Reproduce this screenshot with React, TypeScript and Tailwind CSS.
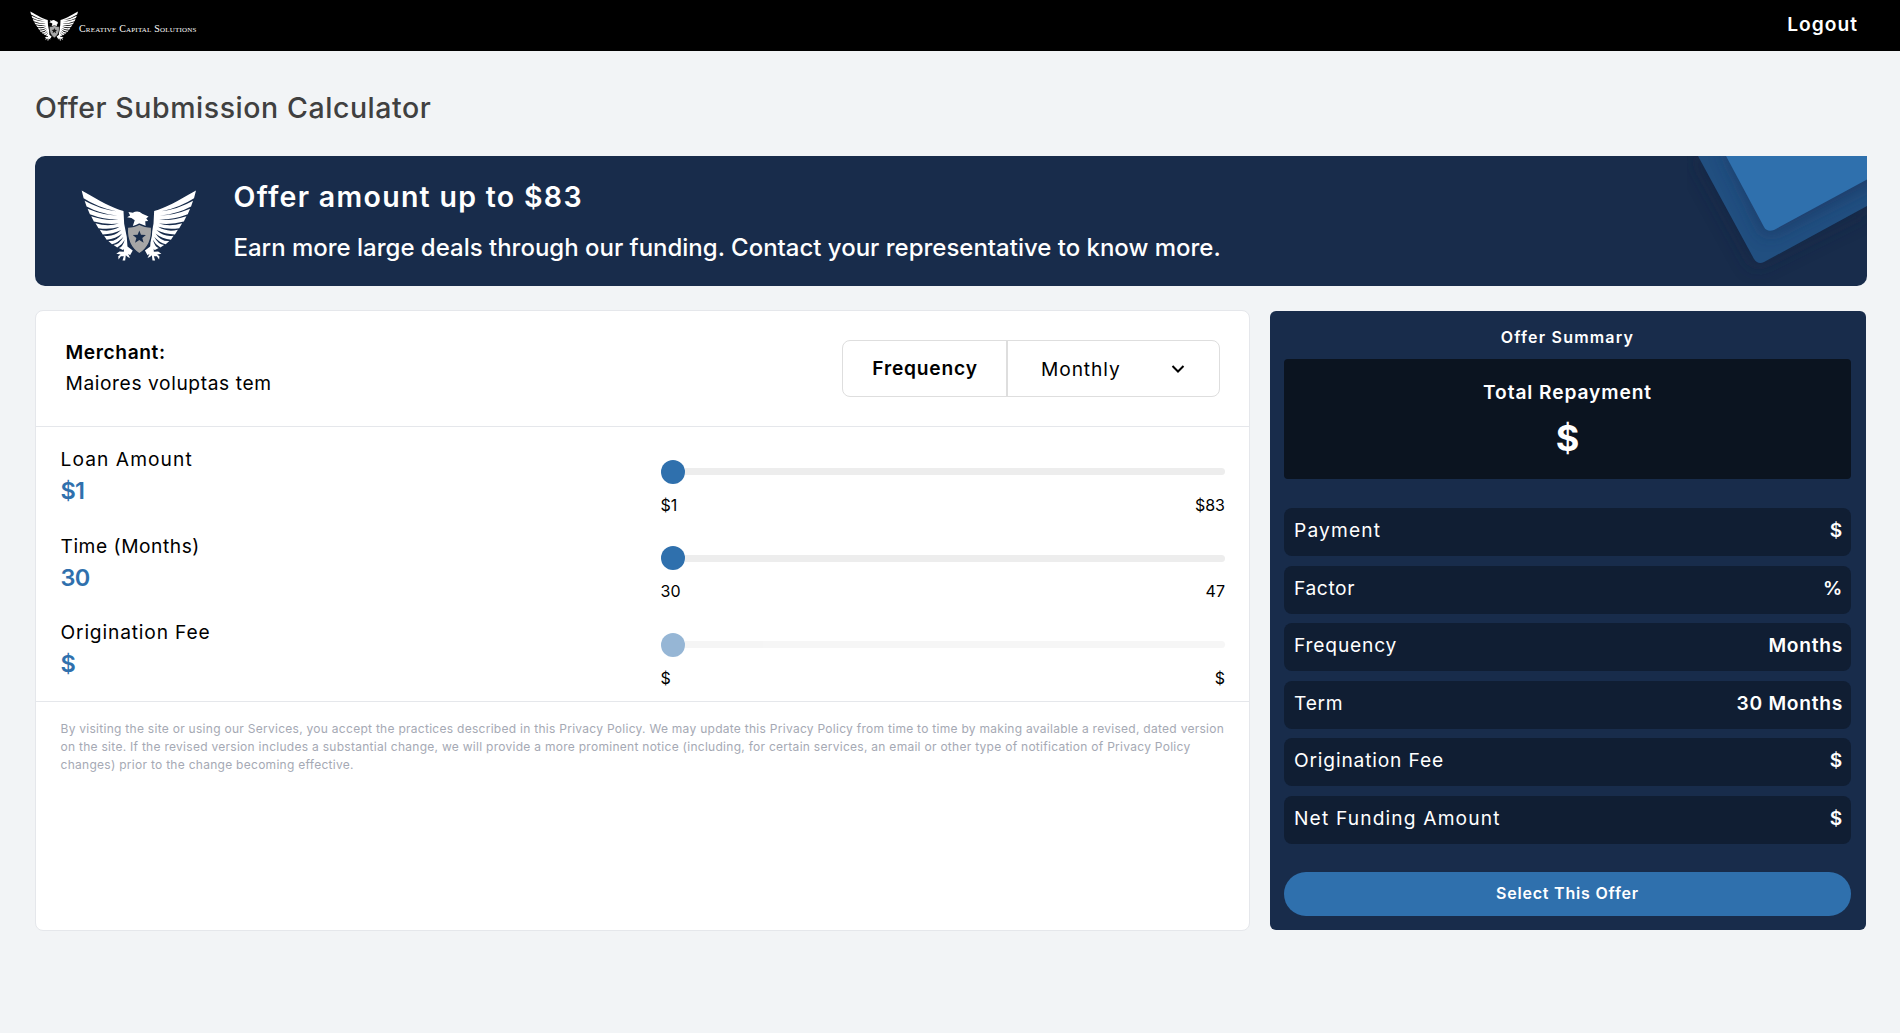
type EagleProps = { className: string; shade: string };

const WING =
  "M162 106 C128 98 92 76 35 44 L41 67 Q82 94 140 107 Q88 100 44 75 L50 92 Q90 114 145 120 Q98 118 53 99 L60 116 Q100 132 147 132 Q108 137 64 122 L72 138 Q108 148 148 144 Q114 155 77 143 L86 158 Q120 163 150 154 Q124 171 90 163 L99 177 Q130 177 155 164 Q132 186 103 181 L111 193 Q138 190 158 174 Q141 199 116 197 L127 207 Q146 202 162 184 Q150 207 132 209 L143 217 Q157 209 166 193 Q159 216 148 218 L160 224 L174 214 L172 185 L164 145 Z";

const FOOT =
  "M164 206 L190 226 L182 240 L176 236 L182 249 L174 245 L169 240 L167 256 L159 256 L163 243 L154 243 L147 253 L146 243 L153 238 L140 236 L150 229 L163 230 Z";

function Eagle({ className, shade }: EagleProps) {
  return (
    <svg viewBox="33 42 349 216" className={className} fill="none">
      {[false, true].map((flip) => (
        <g key={String(flip)} transform={flip ? "translate(417 0) scale(-1 1)" : undefined} fill="#fff">
          <path d={WING} />
          <path d={FOOT} />
        </g>
      ))}
      <path
        d="M173 125 L182 120 L177 109 L190 111 Q206 102 219 114 L238 123 L231 129 L237 136 L228 137 L229 152 L190 152 L196 134 L186 127 Z"
        fill="#fff"
      />
      <path
        d="M174 155 Q195 155 210 146 Q226 155 247 155 Q251 210 210 236 Q170 210 174 155 Z"
        fill="#a6a6a6"
        stroke={shade}
        strokeWidth="4"
      />
      <path
        d="M210 165 L215 178 L230 179 L219 188 L223 202 L210 194 L197 202 L201 188 L190 179 L205 178 Z"
        fill={shade}
      />
    </svg>
  );
}

function BannerShapes() {
  return (
    <svg viewBox="0 0 180 130" className="absolute right-0 top-0 h-[130px] w-[180px]">
      <defs>
        <filter id="soft" x="-30%" y="-30%" width="160%" height="160%">
          <feGaussianBlur stdDeviation="9" />
        </filter>
        <clipPath id="back">
          <path d="M11 0 L67 103 Q71 109 77 106 L180 50 V0 Z" />
        </clipPath>
      </defs>
      <path d="M5 0 L67 112 L180 56 V0 Z" fill="#162544" opacity="0.6" filter="url(#soft)" />
      <path d="M11 0 L67 103 Q71 109 77 106 L180 50 V0 Z" fill="#214f80" />
      <g clipPath="url(#back)">
        <path d="M36 -10 L79 80 L190 24 V-10 Z" fill="#1c3660" opacity="0.75" filter="url(#soft)" />
      </g>
      <path d="M39 0 L77 71 Q80 76.500 87 74 L180 23.500 V0 Z" fill="#2f70ad" />
    </svg>
  );
}

const sliders = [
  { label: "Loan Amount", track: "tracking-[1.06px]", value: "$1", min: "$1", max: "$83", disabled: false },
  { label: "Time (Months)", track: "tracking-[0.54px]", value: "30", min: "30", max: "47", disabled: false },
  { label: "Origination Fee", track: "tracking-[0.84px]", value: "$", min: "$", max: "$", disabled: true },
];

const summary = [
  { label: "Payment", track: "tracking-[1.15px]", value: "$" },
  { label: "Factor", track: "tracking-[0.6px]", value: "%" },
  { label: "Frequency", track: "tracking-[0.82px]", value: "Months" },
  { label: "Term", track: "tracking-[0.75px]", value: "30 Months" },
  { label: "Origination Fee", track: "tracking-[0.83px]", value: "$" },
  { label: "Net Funding Amount", track: "tracking-[1.14px]", value: "$" },
];

const disclaimer = [
  "By visiting the site or using our Services, you accept the practices described in this Privacy Policy. We may update this Privacy Policy from time to time by making available a revised, dated version",
  "on the site. If the revised version includes a substantial change, we will provide a more prominent notice (including, for certain services, an email or other type of notification of Privacy Policy",
  "changes) prior to the change becoming effective.",
];

export default function App() {
  return (
    <div className="min-h-[1033px] bg-[#f2f4f6] font-[Inter,sans-serif] text-[19.2px] text-black">
      <header className="flex h-[51px] justify-between bg-black pl-[30px] pr-[42px]">
        <div className="flex">
          <Eagle className="mt-[11px] h-[30px] w-[48px]" shade="#111" />
          <span className="ml-px mt-[22px] whitespace-nowrap font-['Liberation_Serif',serif] text-[10px] leading-[13px] tracking-[0.2px] text-white [font-variant:small-caps]">
            Creative Capital Solutions
          </span>
        </div>
        <a className="mt-[9px] font-semibold leading-[30px] tracking-[1px] text-white">Logout</a>
      </header>

      <main className="pl-[35px] pr-[33px] pt-[36.5px]">
        <h1 className="text-[28.5px] font-medium leading-10 tracking-[0.56px] text-[#404040]">
          Offer Submission Calculator
        </h1>

        <section className="relative mt-[28.5px] flex h-[130px] overflow-hidden rounded-[10px] rounded-tr-none bg-[#182c4b] text-white">
          <Eagle className="ml-[46px] mt-[33px] h-[73px] w-[115px]" shade="#182c4b" />
          <div className="ml-[37.5px] pt-[21px]">
            <h2 className="text-[28.5px] font-semibold leading-10 tracking-[1.3px]">Offer amount up to $83</h2>
            <p className="mt-[15px] text-2xl font-medium leading-8 tracking-[-0.01px]">
              Earn more large deals through our funding. Contact your representative to know more.
            </p>
          </div>
          <BannerShapes />
        </section>

        <div className="mt-6 flex justify-between">
          <section className="h-[621px] w-[1215px] rounded-lg border border-gray-200 bg-white">
            <div className="flex h-[116px] justify-between border-b border-gray-200 pl-[29.5px] pr-[29px]">
              <div className="pt-[26px] leading-[31px]">
                <p className="font-semibold tracking-[0.6px]">Merchant:</p>
                <p className="tracking-[0.59px]">Maiores voluptas tem</p>
              </div>
              <div className="mt-[29px] flex h-[57px] w-[378px] rounded-lg border border-[#dedede]">
                <div className="flex w-[165px] items-center justify-center border-r-2 border-[#dedede] pl-px font-semibold tracking-[0.8px]">
                  Frequency
                </div>
                <div className="flex flex-1 items-center justify-between pl-[33px] pr-[34px] pt-px">
                  <span className="tracking-[0.9px]">Monthly</span>
                  <svg viewBox="0 0 14 10" className="mb-px h-[10px] w-[14px]" fill="none">
                    <path d="M1.500 2 L7 7.500 L12.500 2" stroke="#000" strokeWidth="2" />
                  </svg>
                </div>
              </div>
            </div>

            <div className="h-[275px] border-b border-gray-200 pl-[24.5px] pr-6 pt-[17px]">
              {sliders.map((s) => (
                <div key={s.label} className="flex h-[86.6px]">
                  <div className="w-[600px] leading-[31px]">
                    <p className={s.track}>{s.label}</p>
                    <p className="text-[23.5px] font-semibold tracking-[-0.7px] text-[#2f70ad]">{s.value}</p>
                  </div>
                  <div className="flex-1 pt-[15.500px]">
                    <div className={s.disabled ? "flex items-center opacity-50" : "flex items-center"}>
                      <span className="h-6 w-6 rounded-full bg-[#2f70ad]" />
                      <span className="h-[7px] flex-1 rounded-r bg-[#ededed]" />
                    </div>
                    <div className="mt-[9px] flex justify-between text-base leading-6">
                      <span>{s.min}</span>
                      <span>{s.max}</span>
                    </div>
                  </div>
                </div>
              ))}
            </div>

            <div className="whitespace-nowrap pl-[24.5px] pt-[18px] text-[12px] leading-[18px] tracking-[0.278px] text-[#a5a9b4]">
              {disclaimer.map((line) => (
                <p key={line}>{line}</p>
              ))}
            </div>
          </section>

          <aside className="mr-px mt-px h-[619px] w-[596px] rounded-md bg-[#182c4b] pl-3.5 pr-[15px] pt-3.5 text-white">
            <h3 className="text-center text-base font-semibold leading-6 tracking-[1.2px]">Offer Summary</h3>
            <div className="mt-2.5 h-[120px] rounded bg-[#0b1420] pt-[17.500px] text-center font-semibold">
              <p className="leading-[30px] tracking-[0.9px]">Total Repayment</p>
              <p className="mt-[7px] text-[36px] font-bold leading-[48px]">$</p>
            </div>
            <ul className="mt-[29px] flex flex-col gap-[9.6px]">
              {summary.map((row) => (
                <li key={row.label} className="flex h-12 items-center justify-between rounded-lg bg-[#101e33] pb-[3px] pl-2.5 pr-2">
                  <span className={row.track}>{row.label}</span>
                  <span className="font-semibold tracking-[0.72px]">{row.value}</span>
                </li>
              ))}
            </ul>
            <button className="mt-7 h-11 w-full rounded-full bg-[#2f70ad] pb-px text-base font-semibold tracking-[0.8px]">
              Select This Offer
            </button>
          </aside>
        </div>
      </main>
    </div>
  );
}
